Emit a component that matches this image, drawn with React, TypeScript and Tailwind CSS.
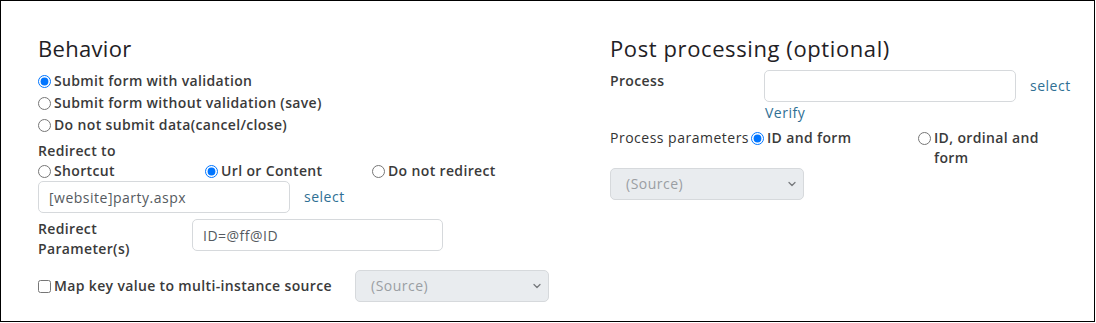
import { ChevronDown } from "lucide-react";

const font = { fontFamily: "'Open Sans', 'Liberation Sans', sans-serif" } as const;

function Radio({ label, checked, name }: { label: string; checked?: boolean; name: string }) {
  return (
    <label className="flex items-center gap-[3px] font-semibold tracking-[0.35px] text-[#3a3a3a]">
      <input type="radio" name={name} defaultChecked={checked} className="m-0 w-[13px] h-[13px] shrink-0" />
      <span>{label}</span>
    </label>
  );
}

function SourceSelect({ width }: { width: string }) {
  return (
    <div className={`relative h-[32px] ${width}`}>
      <select
        disabled
        className="appearance-none w-full h-full rounded-[5px] border border-[#d6d9dc] bg-[#e9ecef] pl-[15px] text-[14px] tracking-[0.5px] text-[#9a9ea3]"
        style={font}
      >
        <option>(Source)</option>
      </select>
      <ChevronDown className="absolute right-[6px] top-[10px] w-[12px] h-[12px] text-[#76797c]" strokeWidth={2.5} />
    </div>
  );
}

export default function App() {
  return (
    <div className="w-[1095px] h-[322px] border border-black bg-white flex text-[14px] leading-[22px]" style={font}>
      {/* Behavior */}
      <div className="w-[609px] pl-[37px] pt-[35px] flex flex-col">
        <h2 className="text-[22px] leading-[24px] tracking-[0.3px] text-[#1f2125]">Behavior</h2>
        <div className="mt-[10px] flex flex-col">
          <Radio name="behavior" label="Submit form with validation" checked />
          <Radio name="behavior" label="Submit form without validation (save)" />
          <Radio name="behavior" label="Do not submit data(cancel/close)" />
        </div>
        <div className="mt-[5px] font-semibold tracking-[0.35px] text-[#3a3a3a] leading-[20px]">Redirect to</div>
        <div className="flex leading-[20px]">
          <div className="w-[167px]"><Radio name="redirect" label="Shortcut" /></div>
          <div className="w-[167px]"><Radio name="redirect" label="Url or Content" checked /></div>
          <div><Radio name="redirect" label="Do not redirect" /></div>
        </div>
        <div className="flex items-center">
          <input
            defaultValue="[website]party.aspx"
            className="w-[252px] h-[32px] rounded-[5px] border border-[#d6d9dc] px-[10px] text-[14px] tracking-[0.5px] text-[#555a60]"
            style={font}
          />
          <a className="ml-[14px] tracking-[0.5px] text-[#2f6f94]">select</a>
        </div>
        <div className="mt-[6px] flex">
          <div className="w-[154px] font-semibold tracking-[0.35px] text-[#3a3a3a] leading-[20px]">
            Redirect
            <br />
            Parameter(s)
          </div>
          <input
            defaultValue="ID=@ff@ID"
            className="w-[251px] h-[32px] rounded-[5px] border border-[#d6d9dc] px-[10px] text-[14px] tracking-[0.5px] text-[#555a60]"
            style={font}
          />
        </div>
        <div className="mt-[11px] flex items-center">
          <label className="w-[317px] flex items-center gap-[3px] font-semibold tracking-[0.35px] text-[#3a3a3a]">
            <input type="checkbox" className="m-0 w-[13px] h-[13px]" />
            <span>Map key value to multi-instance source</span>
          </label>
          <SourceSelect width="w-[194px]" />
        </div>
      </div>

      {/* Post processing */}
      <div className="flex-1 pt-[35px] flex flex-col">
        <h2 className="text-[22px] leading-[24px] tracking-[0.6px] text-[#1f2125]">Post processing (optional)</h2>
        <div className="mt-[10px] flex">
          <div className="w-[154px] font-semibold tracking-[0.35px] text-[#3a3a3a]">Process</div>
          <div className="flex flex-col">
            <input className="w-[252px] h-[32px] rounded-[5px] border border-[#d6d9dc]" />
            <a className="ml-[1px] leading-[21px] tracking-[0.5px] text-[#2f6f94]">Verify</a>
          </div>
          <a className="ml-[14px] mt-[5px] tracking-[0.5px] text-[#2f6f94]">select</a>
        </div>
        <div className="mt-[5px] flex items-start leading-[20px]">
          <span className="w-[141px] tracking-[0.5px] text-[#333]">Process parameters</span>
          <div className="w-[167px]"><Radio name="params" label="ID and form" checked /></div>
          <label className="flex items-start gap-[3px] font-semibold tracking-[0.35px] text-[#3a3a3a]">
            <input type="radio" name="params" className="m-0 mt-[4px] w-[13px] h-[13px] shrink-0" />
            <span className="w-[125px]">ID, ordinal and form</span>
          </label>
        </div>
        <div>
          <SourceSelect width="w-[194px]" />
        </div>
      </div>
    </div>
  );
}
